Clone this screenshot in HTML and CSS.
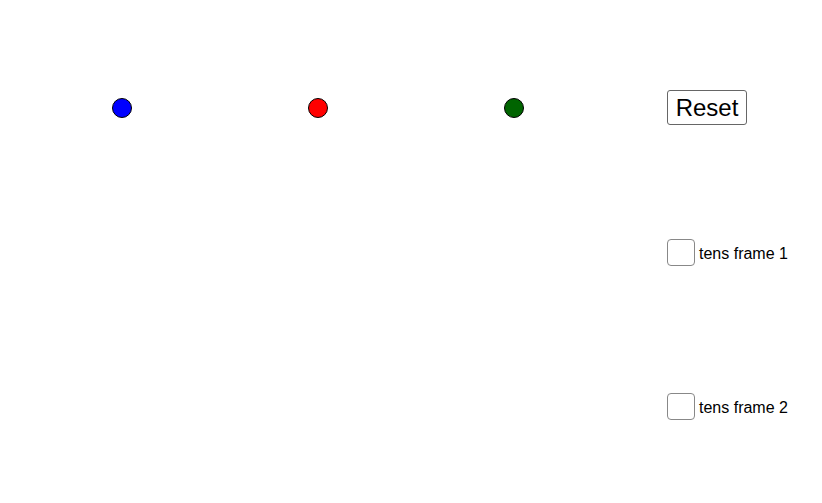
FILE: index.html
```html
<!DOCTYPE html>
<html>
<head>
<meta charset="utf-8">
<link rel="stylesheet" href="styles.css">
</head>
<body>
<div class="stage">
  <div class="dots">
    <span class="dot blue"></span>
    <span class="dot red"></span>
    <span class="dot green"></span>
  </div>
  <div class="panel">
    <button class="reset">Reset</button>
    <label class="check first"><span class="box"></span><span class="label">tens frame 1</span></label>
    <label class="check second"><span class="box"></span><span class="label">tens frame 2</span></label>
  </div>
</div>
</body>
</html>
```
FILE: styles.css
```css
html, body {
  margin: 0;
  padding: 0;
  background: #fff;
}
.stage {
  width: 822px;
  height: 503px;
  display: flex;
  align-items: flex-start;
  padding-left: 112px;
  box-sizing: border-box;
  font-family: "Liberation Sans", Arial, sans-serif;
}
.dots {
  display: flex;
  gap: 176px;
  margin-top: 98px;
}
.dot {
  width: 20px;
  height: 20px;
  box-sizing: border-box;
  border: 1px solid #000;
  border-radius: 50%;
  display: block;
}
.blue { background: #0000ff; }
.red { background: #ff0000; }
.green { background: #006400; }
.panel {
  margin-left: 143px;
  margin-top: 90px;
  display: flex;
  flex-direction: column;
  align-items: flex-start;
}
.reset {
  width: 80px;
  height: 35px;
  box-sizing: border-box;
  border: 1px solid #666;
  border-radius: 3px;
  background: #fff;
  font-family: "Liberation Sans", Arial, sans-serif;
  font-size: 24px;
  color: #000;
  padding: 0;
  line-height: 33px;
}
.check {
  display: flex;
  align-items: center;
  height: 27px;
}
.check.first { margin-top: 114px; }
.check.second { margin-top: 127px; }
.box {
  width: 28px;
  height: 27px;
  box-sizing: border-box;
  border: 1px solid #888;
  border-radius: 4px;
  background: #fff;
}
.label {
  margin-left: 4px;
  font-size: 16px;
  color: #000;
  position: relative;
  top: 1px;
}
```
